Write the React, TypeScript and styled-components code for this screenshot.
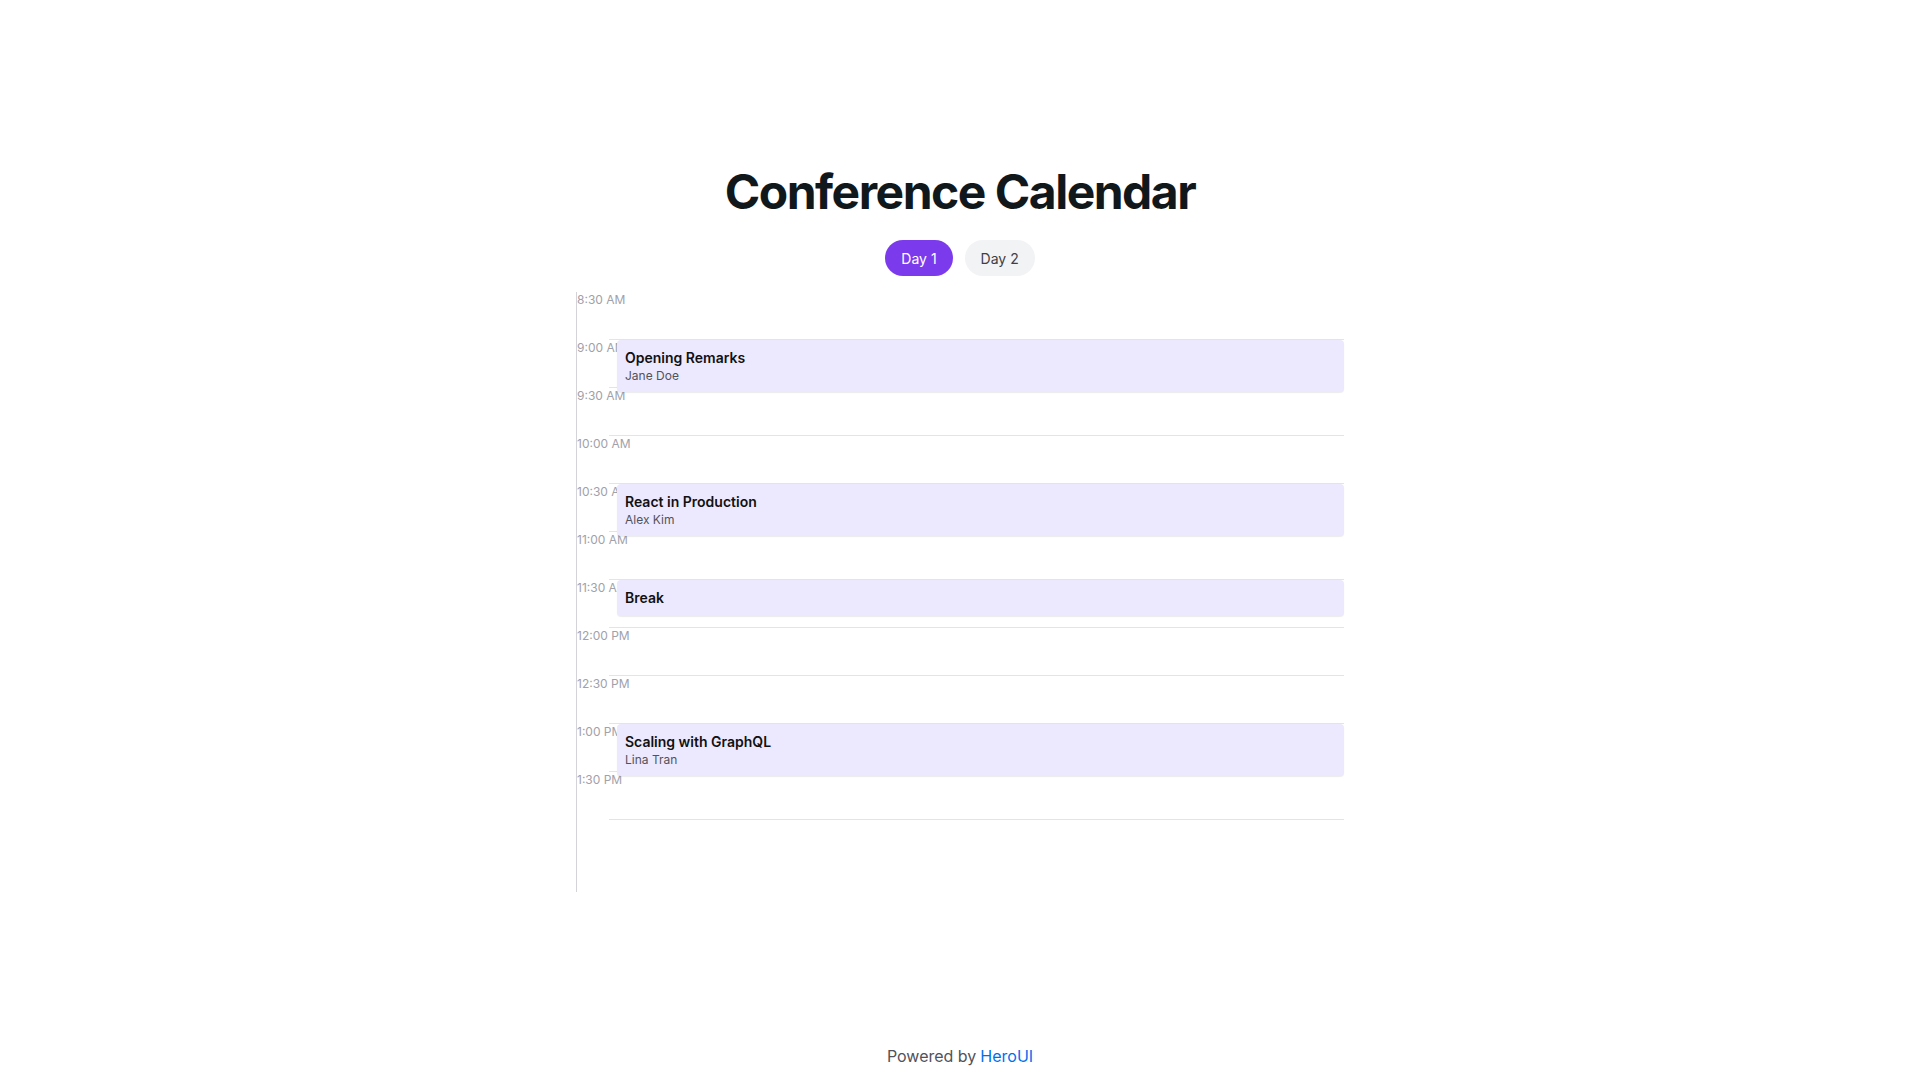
import { useState } from "react";
import styled, { createGlobalStyle } from "styled-components";

const GlobalStyle = createGlobalStyle`
  * {
    box-sizing: border-box;
  }
  body {
    margin: 0;
    background: #ffffff;
    font-family: Inter, "Noto Sans", sans-serif;
    color: #11181c;
  }
  #root {
    min-height: 100vh;
    display: flex;
    flex-direction: column;
  }
`;

const Main = styled.main`
  flex: 1;
  display: flex;
  flex-direction: column;
  align-items: center;
  padding-top: 168px;
`;

const Title = styled.h1`
  margin: 0 0 24px;
  font-size: 48px;
  line-height: 48px;
  font-weight: 700;
  letter-spacing: -1.5px;
  color: #11181c;
`;

const Tabs = styled.div`
  display: flex;
  gap: 12px;
  margin-bottom: 16px;
`;

const Tab = styled.button<{ $active: boolean }>`
  height: 36px;
  padding: 0 16px;
  border: none;
  border-radius: 9999px;
  font-family: inherit;
  font-size: 14px;
  cursor: pointer;
  background: ${(p) => (p.$active ? "#7c3aed" : "#f2f3f5")};
  color: ${(p) => (p.$active ? "#ffffff" : "#3f3f46")};
`;

const Timeline = styled.div`
  position: relative;
  width: 768px;
  height: 600px;
  border-left: 1px solid #d4d4d8;
`;

const Row = styled.div`
  position: relative;
  height: 48px;
  margin-left: 32px;
  border-bottom: 1px solid #e4e4e7;
`;

const TimeLabel = styled.span`
  position: absolute;
  left: -32px;
  top: 0;
  font-size: 12px;
  line-height: 16px;
  color: #a1a1aa;
  white-space: nowrap;
`;

const Event = styled.div`
  position: absolute;
  left: 40px;
  right: 0;
  padding: 8px;
  border-radius: 4px;
  background: #ece9fe;
  box-shadow: 0 1px 1px rgba(0, 0, 0, 0.08);
`;

const EventTitle = styled.div`
  font-size: 14px;
  line-height: 20px;
  font-weight: 600;
  color: #111111;
`;

const EventSpeaker = styled.div`
  font-size: 12px;
  line-height: 16px;
  color: #52525b;
`;

const Footer = styled.footer`
  display: flex;
  justify-content: center;
  align-items: center;
  gap: 4px;
  padding: 12px 0;
  font-size: 16px;
  line-height: 24px;
`;

const Muted = styled.span`
  color: #52525b;
`;

const Brand = styled.a`
  color: #006fee;
  text-decoration: none;
`;

interface Session {
  title: string;
  speaker?: string;
  slot: number;
}

const times = [
  "8:30 AM",
  "9:00 AM",
  "9:30 AM",
  "10:00 AM",
  "10:30 AM",
  "11:00 AM",
  "11:30 AM",
  "12:00 PM",
  "12:30 PM",
  "1:00 PM",
  "1:30 PM",
];

const days: Session[][] = [
  [
    { title: "Opening Remarks", speaker: "Jane Doe", slot: 1 },
    { title: "React in Production", speaker: "Alex Kim", slot: 4 },
    { title: "Break", slot: 6 },
    { title: "Scaling with GraphQL", speaker: "Lina Tran", slot: 9 },
  ],
  [
    { title: "Keynote", speaker: "Sam Lee", slot: 1 },
    { title: "Design Systems", speaker: "Maya Chen", slot: 3 },
    { title: "Lunch", slot: 7 },
  ],
];

export default function App() {
  const [day, setDay] = useState(0);

  return (
    <>
      <GlobalStyle />
      <Main>
        <Title>Conference Calendar</Title>
        <Tabs>
          {["Day 1", "Day 2"].map((label, i) => (
            <Tab key={label} $active={day === i} onClick={() => setDay(i)}>
              {label}
            </Tab>
          ))}
        </Tabs>
        <Timeline>
          {times.map((t) => (
            <Row key={t}>
              <TimeLabel>{t}</TimeLabel>
            </Row>
          ))}
          {days[day].map((s) => (
            <Event key={s.title} style={{ top: s.slot * 48 }}>
              <EventTitle>{s.title}</EventTitle>
              {s.speaker && <EventSpeaker>{s.speaker}</EventSpeaker>}
            </Event>
          ))}
        </Timeline>
      </Main>
      <Footer>
        <Muted>Powered by</Muted>
        <Brand href="#">HeroUI</Brand>
      </Footer>
    </>
  );
}
